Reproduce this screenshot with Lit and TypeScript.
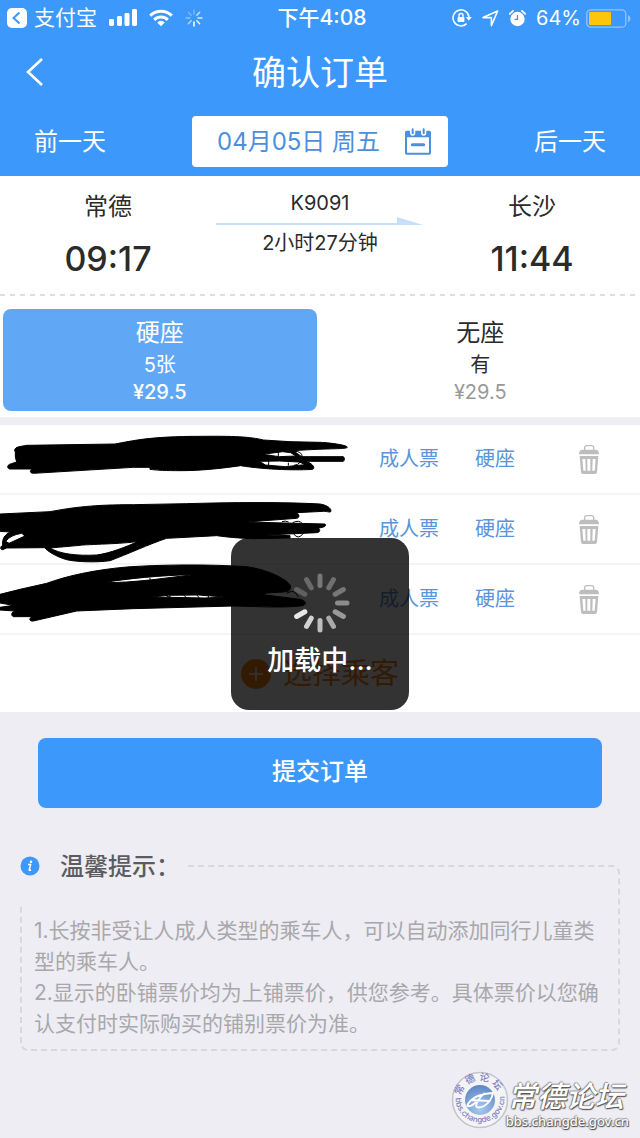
import { LitElement, html, css, svg } from "lit";
import { customElement, state } from "lit/decorators.js";

interface Seat {
  name: string;
  left: string;
  price: string;
}

const SEATS: Seat[] = [
  { name: "硬座", left: "5张", price: "¥29.5" },
  { name: "无座", left: "有", price: "¥29.5" },
];

const PASSENGERS = [
  { ticket: "成人票", seat: "硬座" },
  { ticket: "成人票", seat: "硬座" },
  { ticket: "成人票", seat: "硬座" },
];

const TIPS = [
  "1.长按非受让人成人类型的乘车人，可以自动添加同行儿童类型的乘车人。",
  "2.显示的卧铺票价均为上铺票价，供您参考。具体票价以您确认支付时实际购买的铺别票价为准。",
];

@customElement("status-bar")
class StatusBar extends LitElement {
  static styles = css`
    :host {
      display: grid;
      grid-template-columns: 1fr auto 1fr;
      align-items: center;
      height: 36px;
      padding: 0 9px 0 7px;
      color: #fff;
      font-size: 20px;
      line-height: 28px;
    }
    svg {
      display: block;
      flex: none;
    }
    .side {
      display: flex;
      align-items: center;
      gap: 12px;
    }
    .right {
      justify-content: flex-end;
      gap: 10px;
    }
    .app,
    .power {
      display: flex;
      align-items: center;
      gap: 7px;
    }
    .power {
      gap: 5px;
    }
    .app {
      font-size: 21px;
    }
    .time {
      padding-left: 6px;
      font-size: 21px;
      font-weight: 500;
    }
  `;

  render() {
    const rays = [1, 0.9, 0.8, 0.7, 0.3, 0.3, 0.4, 0.6];
    return html`
      <div class="side">
        <span class="app">
          <svg width="20" height="20" viewBox="0 0 20 20">
            <rect width="20" height="20" rx="5" fill="#fff" />
            <path d="M12.5 4.5 6.5 10l6 5.5" fill="none" stroke="#3d98fb" stroke-width="2" />
          </svg>
          支付宝
        </span>
        <svg width="28" height="18" viewBox="0 0 28 18" fill="#fff">
          <rect x="0" y="10" width="5" height="7" rx="1.4" />
          <rect x="8" y="7" width="5" height="10" rx="1.4" />
          <rect x="15.5" y="4" width="5" height="13" rx="1.4" />
          <rect x="23" y="0" width="5" height="17" rx="1.4" />
        </svg>
        <svg width="24" height="18" viewBox="0 0 24 18" fill="none" stroke="#fff" stroke-width="3">
          <path d="M1.2 6.6a15.5 15.5 0 0 1 21.6 0" />
          <path d="M5.2 10.8a9.8 9.8 0 0 1 13.6 0" />
          <path d="M12 17.2 8.2 13.4a5.4 5.4 0 0 1 7.6 0z" fill="#fff" stroke="none" />
        </svg>
        <svg width="18" height="18" viewBox="-9 -9 18 18" stroke="#fff" stroke-width="1.5" stroke-linecap="round">
          ${rays.map(
            (o, i) => svg`<path d="M0 -4V-8" opacity=${o} transform="rotate(${180 - i * 45})" />`
          )}
        </svg>
      </div>
      <span class="time">下午4:08</span>
      <div class="side right">
        <svg width="20" height="18" viewBox="0 0 20 18">
          <path d="M14.6 14.6A8 8 0 1 1 17 8.6" fill="none" stroke="#fff" stroke-width="1.5" />
          <path d="M13.8 8h6l-3 3.8z" fill="#fff" />
          <rect x="5.6" y="8" width="6.8" height="5" rx=".8" fill="#fff" />
          <path d="M7 8V6.5a2 2 0 0 1 4 0V8" fill="none" stroke="#fff" stroke-width="1.4" />
        </svg>
        <svg width="17" height="17" viewBox="0 0 17 17">
          <path d="M1 7.6 15.6 1 9.4 15.6V7.6z" fill="none" stroke="#fff" stroke-width="1.6" stroke-linejoin="round" />
        </svg>
        <svg width="17" height="17" viewBox="0 0 17 17">
          <circle cx="8.5" cy="9" r="7.2" fill="#fff" />
          <path d="M.8 3.8 4 .9M16.2 3.8 13 .9" stroke="#fff" stroke-width="1.8" stroke-linecap="round" />
          <path d="M8.5 5v4.4H5.6" fill="none" stroke="#3d98fb" stroke-width="1.3" />
        </svg>
        <span class="power">
          64%
          <svg width="45" height="19" viewBox="0 0 45 19">
            <rect x=".8" y=".8" width="39" height="17.4" rx="4" fill="none" stroke="#8cc3ff" stroke-width="1.3" />
            <rect x="3" y="3" width="22" height="13" rx="1" fill="#fdc60a" />
            <path d="M42 6v7q2.5-1 2.5-3.5T42 6z" fill="#8cc3ff" />
          </svg>
        </span>
      </div>
    `;
  }
}

@customElement("loading-toast")
class LoadingToast extends LitElement {
  static styles = css`
    :host {
      display: flex;
      flex-direction: column;
      align-items: center;
      gap: 9px;
      padding: 34px 36px 31px;
      border-radius: 18px;
      background: rgba(0, 0, 0, 0.8);
      color: #fff;
      font-size: 27px;
      font-weight: 500;
      line-height: 36px;
    }
    svg {
      display: block;
    }
  `;

  render() {
    const shades = [
      [0, "#777"], [30, "#707070"], [60, "#777"], [90, "#8c8c8c"], [120, "#999"],
      [150, "#aaa"], [180, "#bdbdbd"], [210, "#d2d2d2"], [240, "#e8e8e8"],
      [300, "#606060"], [330, "#6a6a6a"],
    ];
    return html`
      <svg width="62" height="62" viewBox="-31 -31 62 62" stroke-width="5" stroke-linecap="round">
        ${shades.map(
          ([angle, c]) => svg`<path d="M0 -17.5V-27" stroke=${c} transform="rotate(${angle})" />`
        )}
      </svg>
      <span>加载中...</span>
    `;
  }
}

@customElement("forum-mark")
class ForumMark extends LitElement {
  static styles = css`
    :host {
      display: flex;
      align-items: flex-end;
      justify-content: flex-end;
      padding: 0 11px 9px 0;
    }
    svg {
      display: block;
    }
    .ring {
      font-size: 10px;
      font-weight: 500;
      fill: #7f7fc4;
    }
    .ring.small {
      font-size: 8px;
    }
    .words {
      display: flex;
      flex-direction: column;
      margin-left: -3px;
      color: #fff;
      text-shadow: 1px 1px 1px #555, -1px 0 1px #888, 0 -1px 1px #999, 0 1px 1px #777;
    }
    .name {
      padding-left: 2px;
      font-size: 29px;
      font-style: italic;
      font-weight: 500;
      line-height: 33px;
    }
    .site {
      color: #fafafa;
      font-family: "Noto Sans", "Open Sans", sans-serif;
      font-size: 13px;
      font-weight: 500;
      line-height: 16px;
    }
  `;

  render() {
    return html`
      <svg width="58" height="58" viewBox="0 0 58 58">
        <defs>
          <radialGradient id="orb" cx=".5" cy=".8" r=".8">
            <stop offset="0" stop-color="#a9c9ee" />
            <stop offset="1" stop-color="#5d86c4" />
          </radialGradient>
          <path id="upper" d="M9.5 29a19.5 19.5 0 0 1 39 0" />
          <path id="lower" d="M4.5 27a24.5 24.5 0 0 0 49 0" />
        </defs>
        <circle cx="29" cy="29" r="27.5" fill="#f4f4f7" stroke="#c4c4c9" stroke-width="1.5" />
        <circle cx="29" cy="29" r="15" fill="url(#orb)" />
        <path
          d="M16 35C19 28 27 23 42 22c-1 5-4 10-9 13-4 2-7 2-8 0 1-5 5-10 9-13M16 35c3 1 6-1 9-4M20 29l18 1"
          fill="none" stroke="#fff" stroke-width="1.8" stroke-linejoin="round"
        />
        <text class="ring"><textPath href="#upper" startOffset="4">常 德 论 坛</textPath></text>
        <text class="ring small"><textPath href="#lower" startOffset="0">bbs.changde.gov.cn</textPath></text>
      </svg>
      <div class="words">
        <span class="name">常德论坛</span>
        <span class="site">bbs.changde.gov.cn</span>
      </div>
    `;
  }
}

@customElement("app-root")
class AppRoot extends LitElement {
  @state() private seat = 0;

  static styles = css`
    :host {
      position: relative;
      display: flex;
      flex-direction: column;
      min-height: 100vh;
      box-sizing: border-box;
      background: #eeedf3;
      color: #2b2b2b;
      font-family: Inter, "Noto Sans CJK SC", sans-serif;
      font-size: 20px;
    }
    * {
      box-sizing: border-box;
    }
    button {
      margin: 0;
      padding: 0;
      border: 0;
      background: none;
      color: inherit;
      font: inherit;
      cursor: pointer;
    }
    h1,
    h2,
    p,
    ul {
      margin: 0;
      padding: 0;
      font-weight: 400;
      list-style: none;
    }
    svg {
      display: block;
    }

    .head {
      padding-bottom: 9px;
      background: #3d98fb;
      color: #fff;
    }
    .nav {
      display: grid;
      grid-template-columns: 48px 1fr 48px;
      align-items: center;
      height: 72px;
    }
    .back {
      padding: 20px 0 20px 26px;
    }
    .title {
      padding-top: 2px;
      font-size: 34px;
      line-height: 48px;
      text-align: center;
    }
    .days {
      display: grid;
      grid-template-columns: 1fr 256px 1fr;
      align-items: center;
      margin-top: 8px;
      padding: 0 34px;
      font-size: 24px;
      line-height: 36px;
    }
    .prev {
      justify-self: start;
    }
    .next {
      justify-self: end;
    }
    .date {
      display: flex;
      align-items: center;
      justify-content: space-between;
      height: 51px;
      padding: 0 17px 0 25px;
      border-radius: 4px;
      background: #fff;
      color: #4c8fdb;
      white-space: nowrap;
    }

    .route {
      display: grid;
      grid-template-columns: 1fr 208px 1fr;
      padding: 13px 0 10px;
      background: #fff;
      text-align: center;
    }
    .city {
      font-size: 24px;
      line-height: 36px;
    }
    .clock {
      margin-top: 9px;
      font-size: 34px;
      font-weight: 500;
      line-height: 50px;
    }
    .train {
      line-height: 28px;
    }
    .span {
      line-height: 34px;
    }
    .arrow {
      width: 100%;
    }
    .perforation {
      height: 2px;
      background: repeating-linear-gradient(90deg, #dedede 0 5px, #fff 5px 10px);
    }

    .seats {
      display: grid;
      grid-template-columns: 1fr 1fr;
      gap: 7px;
      padding: 13px 3px 6px;
      background: #fff;
    }
    .seat {
      display: flex;
      flex-direction: column;
      align-items: center;
      padding: 7px 0;
      border-radius: 8px;
    }
    .seat.on {
      background: #60a8f6;
      color: #fff;
    }
    .kind {
      font-size: 24px;
      line-height: 34px;
    }
    .left {
      line-height: 30px;
    }
    .price {
      color: #999;
      line-height: 24px;
    }
    .on .price {
      color: #fff;
      font-weight: 500;
    }

    .people {
      position: relative;
      margin-top: 8px;
      background: #fff;
    }
    .row {
      display: grid;
      grid-template-columns: 1fr 96px 104px 61px;
      align-items: center;
      justify-items: start;
      height: 70px;
      border-bottom: 2px solid #f4f4f4;
      color: #5a94dc;
      line-height: 28px;
    }
    .scribble {
      position: absolute;
      top: 0;
      left: 0;
      pointer-events: none;
    }
    .choose {
      display: flex;
      align-items: center;
      justify-content: center;
      gap: 12px;
      width: 100%;
      height: 77px;
      color: #ff8010;
      font-size: 29px;
      line-height: 40px;
    }

    .submit {
      margin: 26px 38px 0;
      padding: 17px 0 19px;
      border-radius: 8px;
      background: #3d98fb;
      color: #fff;
      font-size: 24px;
      font-weight: 500;
      line-height: 34px;
    }

    .tips-head {
      position: relative;
      display: flex;
      align-items: center;
      align-self: flex-start;
      gap: 20px;
      height: 74px;
      margin-top: 21px;
      padding: 0 4px 0 20px;
      background: #eeedf3;
      color: #5c5c60;
    }
    .tips-title {
      padding-top: 2px;
      font-size: 24px;
      font-weight: 500;
      line-height: 34px;
    }
    .tips {
      margin: -38px 20px 0;
      padding: 48px 12px 10px;
      border: 2px dashed #d8d8dc;
      border-radius: 8px;
      color: #a8a8ac;
      font-size: 21px;
      line-height: 31px;
    }
    .mark {
      margin-top: auto;
    }

    .veil {
      position: absolute;
      inset: 110px 0 0;
      display: flex;
      align-items: center;
      justify-content: center;
      pointer-events: none;
    }
  `;

  private trash() {
    return html`<svg width="20" height="29" viewBox="0 0 60 87">
      <path d="M17 15V8q0-6 6-6h15q6 0 6 6v7" fill="none" stroke="#bdbdbd" stroke-width="4" />
      <path d="M0 28q0-14 10-14h40q10 0 10 14z" fill="#bdbdbd" />
      <path
        fill-rule="evenodd" fill="#bdbdbd"
        d="M2 33h56l-4 49q-1 5-6 5H12q-5 0-6-5zM10 42l3 35h7l-1-35zM25 42v35h9V42zM41 42l-1 35h7l3-35z"
      />
    </svg>`;
  }

  private scribble() {
    return html`<svg class="scribble" width="360" height="215" viewBox="0 15 1080 645" aria-hidden="true">
      <g fill-rule="evenodd" stroke="#000" stroke-width="3" stroke-linejoin="round">
        <path
          d="M44 90C46 80 60 80 80 76L345 72C400 62 450 49 600 49 700 48 750 50 790 60L870 65 960 67C1000 69 1042 76 1042 82 1038 88 1000 84 880 92L905 110H1030C1034 112 1034 122 1030 124L918 124C940 132 946 144 938 148 900 151 800 150 722 137 650 147 600 152 540 152 500 152 470 151 450 148V142L400 142 100 160C90 160 88 152 96 147H60L30 147C20 146 20 134 34 131L50 126Q44 110 46 98ZM788 103l60-8 24 3 16 10-50 2ZM778 124l60-1 60 3 18 8-60 6-60-5Z"
        />
        <path
          d="M0 282 150 275C220 262 280 254 400 254L560 251C700 247 850 246 960 252 985 256 996 268 992 275 988 278 984 274 970 274L890 278C900 284 898 294 890 295L740 306 975 312C978 316 976 320 970 321L955 325C962 330 960 337 950 338L800 345 870 347V354L760 356C720 355 680 351 650 347L500 355C450 371 380 404 330 422 290 428 230 426 200 419 170 411 140 392 134 383L20 384 8 389C0 389 0 380 8 376 6 355 14 345 30 336L0 334ZM150 384C180 402 230 408 290 405 330 400 380 380 415 364 370 372 260 373 240 376ZM17 364q14-19 48-24l10 8-48 22Z"
        />
        <path
          d="M0 523 60 508 140 490C200 468 280 450 380 441 480 434 620 432 740 440 800 448 860 476 872 498 872 512 866 515 850 516L800 519 790 524 900 538C920 543 920 553 908 557 860 564 780 560 700 558L400 566 230 573 100 603C88 605 86 595 96 590H40C32 586 34 577 44 573L0 570V562L40 556 0 549ZM310 488C380 476 480 466 580 464L450 480C400 485 360 488 310 488ZM455 531l50-5 90-1 80 6-60 3Z"
        />
      </g>
      <path
        d="M806 104v32M835 96v16M865 128v9M874 98q20-10 32 6 0 30-24 32M878 308q20-10 30 4M880 340q14 22 30 0l-2-8M846 305q10-4 20 1M450 474v12M58 508l8 8M70 506l-8 12M860 520q16-10 26-2l10 14M500 530h12M550 524l10 10M590 524l8 10M625 528v6"
        fill="none" stroke="#000" stroke-width="3"
      />
    </svg>`;
  }

  render() {
    return html`
      <header class="head">
        <status-bar></status-bar>
        <nav class="nav">
          <button class="back" aria-label="返回">
            <svg width="18" height="28" viewBox="0 0 18 28">
              <path d="M16 1 2 14l14 13" fill="none" stroke="#fff" stroke-width="2.6" />
            </svg>
          </button>
          <h1 class="title">确认订单</h1>
        </nav>
        <div class="days">
          <button class="prev">前一天</button>
          <button class="date">
            <span>04月05日 周五</span>
            <svg width="26" height="27" viewBox="0 0 78 81">
              <path
                fill-rule="evenodd" fill="#4c8fdb"
                d="M5 8h10v6q0 9 8 9t8-9V8h17v6q0 9 8 9t8-9V8h9q5 0 5 5v62q0 5-5 5H5q-5 0-5-5V13q0-5 5-5zM6 28v46h66V28z"
              />
              <path d="M23 4v12M56 4v12" stroke="#4c8fdb" stroke-width="6" stroke-linecap="round" />
              <path d="M22 50h34" stroke="#4c8fdb" stroke-width="9" stroke-linecap="round" />
            </svg>
          </button>
          <button class="next">后一天</button>
        </div>
      </header>

      <section class="route">
        <div>
          <div class="city">常德</div>
          <div class="clock">09:17</div>
        </div>
        <div>
          <div class="train">K9091</div>
          <svg class="arrow" height="9" viewBox="0 0 208 9" preserveAspectRatio="none">
            <path d="M0 6H181V0L207 8H0z" fill="#c6dffa" />
          </svg>
          <div class="span">2小时27分钟</div>
        </div>
        <div>
          <div class="city">长沙</div>
          <div class="clock">11:44</div>
        </div>
      </section>
      <div class="perforation"></div>

      <section class="seats">
        ${SEATS.map(
          (s, i) => html`<button
            class="seat ${this.seat === i ? "on" : ""}"
            aria-pressed=${this.seat === i ? "true" : "false"}
            @click=${() => (this.seat = i)}
          >
            <span class="kind">${s.name}</span>
            <span class="left">${s.left}</span>
            <span class="price">${s.price}</span>
          </button>`
        )}
      </section>

      <section class="people">
        <ul>
          ${PASSENGERS.map(
            (p) => html`<li class="row">
              <span></span>
              <button>${p.ticket}</button>
              <button>${p.seat}</button>
              <button aria-label="删除">${this.trash()}</button>
            </li>`
          )}
        </ul>
        <button class="choose">
          <svg width="30" height="30" viewBox="0 0 30 30">
            <circle cx="15" cy="15" r="15" fill="#ff8010" />
            <path d="M15 8v14M8 15h14" stroke="#fff" stroke-width="1.5" />
          </svg>
          选择乘客
        </button>
        ${this.scribble()}
      </section>

      <button class="submit">提交订单</button>

      <div class="tips-head">
        <svg width="20" height="20" viewBox="0 0 20 20">
          <circle cx="10" cy="10" r="9.5" fill="#3d98fb" />
          <circle cx="11" cy="5.8" r="1.3" fill="#fff" />
          <path d="M8 8.6h2.600L9.200 14q0 .8 1.800 0" fill="none" stroke="#fff" stroke-width="1.5" />
        </svg>
        <h2 class="tips-title">温馨提示：</h2>
      </div>
      <div class="tips">${TIPS.map((t) => html`<p>${t}</p>`)}</div>

      <forum-mark class="mark"></forum-mark>

      <div class="veil" role="status"><loading-toast></loading-toast></div>
    `;
  }
}
